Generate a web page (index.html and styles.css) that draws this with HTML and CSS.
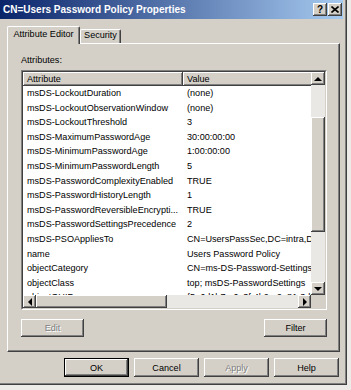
FILE: index.html
```html
<!DOCTYPE html>
<html lang="en">
<head>
    <meta charset="UTF-8">
    <meta name="viewport" content="width=device-width, initial-scale=1.0">
    <title>CN=Users Password Policy Properties</title>
    <link rel="stylesheet" href="styles.css">
</head>
<body>

    <div class="window">
        <!-- Title bar -->
        <div class="titlebar">
            <span class="title">CN=Users Password Policy Properties</span>
            <div class="title-btns">
                <span class="tbtn help">?</span>
                <span class="tbtn">
                    <svg width="8" height="7" viewBox="0 0 8 7"><path d="M0.5 0.5 L7.5 6.5 M7.5 0.5 L0.5 6.5" stroke="#000" stroke-width="1.6"/></svg>
                </span>
            </div>
        </div>

        <!-- Tabs -->
        <div class="tabs">
            <div class="tab active">Attribute Editor</div>
            <div class="tab">Security</div>
        </div>

        <div class="panel">
            <div class="label">Attributes:</div>

            <div class="listbox">
                <div class="list-inner">
                    <div class="view">
                        <div class="list-header">
                            <div class="hcell col-attr">Attribute</div>
                            <div class="hcell col-val">Value</div>
                        </div>
                        <div class="row"><div class="cell col-attr">msDS-LockoutDuration</div><div class="cell col-val">(none)</div></div>
                        <div class="row"><div class="cell col-attr">msDS-LockoutObservationWindow</div><div class="cell col-val">(none)</div></div>
                        <div class="row"><div class="cell col-attr">msDS-LockoutThreshold</div><div class="cell col-val">3</div></div>
                        <div class="row"><div class="cell col-attr">msDS-MaximumPasswordAge</div><div class="cell col-val">30:00:00:00</div></div>
                        <div class="row"><div class="cell col-attr">msDS-MinimumPasswordAge</div><div class="cell col-val">1:00:00:00</div></div>
                        <div class="row"><div class="cell col-attr">msDS-MinimumPasswordLength</div><div class="cell col-val">5</div></div>
                        <div class="row"><div class="cell col-attr">msDS-PasswordComplexityEnabled</div><div class="cell col-val">TRUE</div></div>
                        <div class="row"><div class="cell col-attr">msDS-PasswordHistoryLength</div><div class="cell col-val">1</div></div>
                        <div class="row"><div class="cell col-attr">msDS-PasswordReversibleEncrypti...</div><div class="cell col-val">TRUE</div></div>
                        <div class="row"><div class="cell col-attr">msDS-PasswordSettingsPrecedence</div><div class="cell col-val">2</div></div>
                        <div class="row"><div class="cell col-attr">msDS-PSOAppliesTo</div><div class="cell col-val">CN=UsersPassSec,DC=intra,DC=local</div></div>
                        <div class="row"><div class="cell col-attr">name</div><div class="cell col-val">Users Password Policy</div></div>
                        <div class="row"><div class="cell col-attr">objectCategory</div><div class="cell col-val">CN=ms-DS-Password-Settings,CN=Schema</div></div>
                        <div class="row"><div class="cell col-attr">objectClass</div><div class="cell col-val">top; msDS-PasswordSettings</div></div>
                        <div class="row"><div class="cell col-attr">objectGUID</div><div class="cell col-val">{5a6d1b7e-0c3f-4b2a-9e81-3d2f}</div></div>
                    </div>

                    <!-- Vertical scrollbar -->
                    <div class="vscroll">
                        <div class="sbtn"><span class="arrow up"></span></div>
                        <div class="track top"></div>
                        <div class="thumb v"></div>
                        <div class="track"></div>
                        <div class="sbtn"><span class="arrow down"></span></div>
                    </div>

                    <!-- Horizontal scrollbar -->
                    <div class="hscroll">
                        <div class="sbtn"><span class="arrow left"></span></div>
                        <div class="thumb h"></div>
                        <div class="track"></div>
                        <div class="sbtn"><span class="arrow right"></span></div>
                    </div>
                    <div class="corner"></div>
                </div>
            </div>

            <div class="panel-buttons">
                <button class="btn small" disabled>Edit</button>
                <button class="btn small">Filter</button>
            </div>
        </div>

        <div class="dialog-buttons">
            <button class="btn default">OK</button>
            <button class="btn">Cancel</button>
            <button class="btn" disabled>Apply</button>
            <button class="btn">Help</button>
        </div>
    </div>

</body>
</html>
```

FILE: styles.css
```css
body {
    margin: 0;
    background-color: #ecebe8;
    font-family: "Liberation Sans", Arial, sans-serif;
    font-size: 9.1px;
    color: #000;
}

.window {
    width: 347px;
    height: 385px;
    box-sizing: border-box;
    background-color: #d4d0c8;
    border-right: 1px solid #404040;
    border-bottom: 1px solid #404040;
    box-shadow: inset -1px -1px #808080;
    padding-right: 3px;
}

/* Title bar */
.titlebar {
    height: 19px;
    display: flex;
    align-items: center;
    justify-content: space-between;
    padding: 0 1px 0 3px;
    background: linear-gradient(to right, #0a246a, #a6caf0);
}

.title {
    color: #fff;
    font-weight: bold;
    font-size: 10px;
}

.title-btns {
    display: flex;
    gap: 1px;
}

.tbtn {
    width: 14px;
    height: 13px;
    box-sizing: border-box;
    display: flex;
    align-items: center;
    justify-content: center;
    background-color: #d4d0c8;
    box-shadow: inset -1px -1px #404040, inset 1px 1px #fff, inset -2px -2px #808080;
}

.tbtn.help {
    font-weight: bold;
    font-size: 10px;
    line-height: 1;
}

/* Tabs */
.tabs {
    display: flex;
    align-items: flex-end;
    height: 17px;
    margin: 7px 0 0 7px;
    position: relative;
    z-index: 1;
}

.tab {
    box-sizing: border-box;
    height: 14px;
    width: 41px;
    line-height: 11px;
    text-align: center;
    background-color: #d4d0c8;
    border-top: 1px solid #fff;
    border-left: 1px solid #fff;
    border-right: 1px solid #404040;
    border-radius: 2px 2px 0 0;
    box-shadow: inset -1px 0 #808080;
}

.tab.active {
    width: 73px;
    height: 18px;
    line-height: 15px;
    margin-bottom: -1px;
}

/* Tab panel */
.panel {
    width: 333px;
    height: 309px;
    margin-left: 7px;
    box-sizing: border-box;
    border-top: 1px solid #fff;
    border-left: 1px solid #fff;
    border-right: 1px solid #404040;
    border-bottom: 1px solid #404040;
    box-shadow: inset -1px -1px #808080;
    padding: 10px 12px 0 13px;
}

.label {
    line-height: 12px;
    margin-bottom: 4px;
}

/* List view */
.listbox {
    width: 306px;
    height: 240px;
    box-sizing: border-box;
    border: 1px solid;
    border-color: #808080 #fff #fff #808080;
}

.list-inner {
    height: 100%;
    box-sizing: border-box;
    border: 1px solid;
    border-color: #404040 #d4d0c8 #d4d0c8 #404040;
    background-color: #fff;
    display: grid;
    grid-template-columns: 1fr 14px;
    grid-template-rows: 1fr 13px;
}

.view {
    overflow: hidden;
    min-width: 0;
}

.list-header {
    display: flex;
    height: 14px;
}

.hcell {
    flex: none;
    box-sizing: border-box;
    padding-left: 4px;
    line-height: 14px;
    background-color: #d4d0c8;
    box-shadow: inset -1px -1px #404040, inset 1px 1px #fff, inset -2px -2px #808080;
}

.col-attr {
    width: 160px;
}

.col-val {
    width: 220px;
}

.row {
    display: flex;
    height: 14.6px;
    line-height: 14.6px;
    white-space: nowrap;
}

.cell {
    flex: none;
    box-sizing: border-box;
    padding-left: 4px;
    overflow: hidden;
}

/* Scrollbars */
.vscroll {
    display: flex;
    flex-direction: column;
}

.hscroll {
    display: flex;
}

.sbtn,
.thumb {
    flex: none;
    box-sizing: border-box;
    background-color: #d4d0c8;
    box-shadow: inset -1px -1px #404040, inset 1px 1px #fff, inset -2px -2px #808080;
}

.sbtn {
    display: flex;
    align-items: center;
    justify-content: center;
}

.vscroll .sbtn {
    height: 13px;
}

.hscroll .sbtn {
    width: 13px;
}

.track {
    flex: 1;
    background-color: #eae8e4;
}

.track.top {
    flex: none;
    height: 32px;
}

.thumb.v {
    height: 115px;
}

.thumb.h {
    width: 131px;
}

.corner {
    background-color: #d4d0c8;
}

.arrow {
    width: 0;
    height: 0;
}

.arrow.up {
    border-left: 4px solid transparent;
    border-right: 4px solid transparent;
    border-bottom: 4px solid #000;
}

.arrow.down {
    border-left: 4px solid transparent;
    border-right: 4px solid transparent;
    border-top: 4px solid #000;
}

.arrow.left {
    border-top: 4px solid transparent;
    border-bottom: 4px solid transparent;
    border-right: 4px solid #000;
}

.arrow.right {
    border-top: 4px solid transparent;
    border-bottom: 4px solid transparent;
    border-left: 4px solid #000;
}

/* Buttons */
.btn {
    width: 65px;
    height: 19px;
    padding: 0;
    box-sizing: border-box;
    font-family: inherit;
    font-size: 9.1px;
    color: #000;
    background-color: #d4d0c8;
    border: none;
    box-shadow: inset -1px -1px #404040, inset 1px 1px #fff, inset -2px -2px #808080;
}

.btn:disabled {
    color: #808080;
    text-shadow: 1px 1px 0 #fff;
}

.btn.default {
    border: 1px solid #000;
}

.btn.small {
    width: 63px;
    height: 18px;
}

.panel-buttons {
    display: flex;
    justify-content: space-between;
    margin-top: 9px;
}

.dialog-buttons {
    display: flex;
    justify-content: flex-end;
    gap: 5px;
    margin: 6px 4px 0 0;
}
```
